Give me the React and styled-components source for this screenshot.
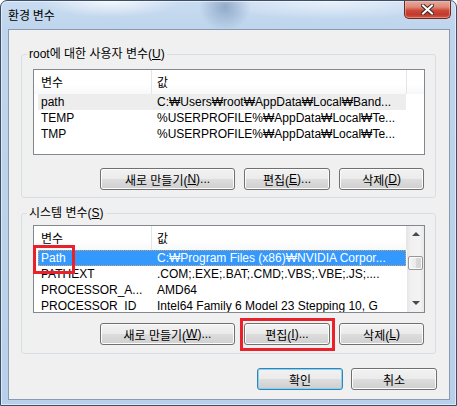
import React from 'react';
import styled, { createGlobalStyle } from 'styled-components';

const GlobalStyle = createGlobalStyle`
  html, body { margin: 0; padding: 0; background: #ffffff; }
  body {
    font-family: "Liberation Sans", "Noto Sans CJK KR", sans-serif;
    font-size: 12px;
    color: #000000;
  }
`;

const Frame = styled.div`
  width: 457px;
  height: 406px;
  box-sizing: border-box;
  border: 1px solid #3d4f66;
  border-radius: 7px 7px 0 0;
  display: flex;
  flex-direction: column;
  overflow: hidden;
  background:
    radial-gradient(ellipse 70px 16px at 110px 0px, rgba(255,255,255,0.8), rgba(255,255,255,0) 100%),
    radial-gradient(ellipse 26px 24px at 224px 6px, rgba(100,130,170,0.55), rgba(100,130,170,0) 100%),
    radial-gradient(ellipse 120px 16px at 330px 2px, rgba(236,243,251,0.85), rgba(236,243,251,0) 100%),
    linear-gradient(180deg, #c9dcf1 0px, #bed5ed 28px, #b9d0ea 100%);
  box-shadow: inset 0 0 0 1px rgba(255,255,255,0.5);
`;

const TitleBar = styled.div`
  height: 28px;
  display: flex;
  align-items: flex-start;
  flex-shrink: 0;
`;

const Title = styled.div`
  padding: 6px 0 0 7px;
  line-height: 16px;
  font-size: 12px;
  font-family: "Noto Sans CJK KR", sans-serif;
  color: #000;
`;

const CloseButton = styled.div`
  margin-left: auto;
  margin-right: 5px;
  width: 47px;
  height: 18px;
  box-sizing: border-box;
  border: 1px solid #6a2a22;
  border-top: none;
  border-radius: 0 0 5px 5px;
  display: flex;
  align-items: center;
  justify-content: center;
  background: linear-gradient(180deg, #e9a898 0%, #df8a78 35%, #cc4a3b 55%, #c2392a 80%, #d35a3f 100%);
  box-shadow: inset 0 0 0 1px rgba(255, 200, 190, 0.45);
`;

const Client = styled.div`
  margin: 0 6px 0 7px;
  height: 371px;
  box-sizing: border-box;
  border: 1px solid #8a9ab0;
  background: #f0f0f0;
  padding: 17px 13px 0 12px;
  display: flex;
  flex-direction: column;
  flex-shrink: 0;
`;

const Group = styled.fieldset`
  margin: 0 0 ${p => p.$gap || 0}px 0;
  padding: 0;
  border: 1px solid #d5dfe5;
  border-radius: 3px;
  min-width: 0;
`;

const Legend = styled.legend`
  margin-left: 5px;
  padding: 0 2px;
  line-height: 14px;
  font-size: 12px;
`;

const GroupBody = styled.div`
  padding: ${p => p.$top}px 10px ${p => p.$bottom}px 11px;
`;

const ListView = styled.div`
  height: ${p => p.$height}px;
  box-sizing: border-box;
  border: 1px solid #828790;
  background: #ffffff;
  display: flex;
  overflow-x: visible;
  overflow-y: clip;
`;

const Columns = styled.div`
  flex: 1;
  min-width: 0;
  display: flex;
  flex-direction: column;
`;

const Header = styled.div`
  display: flex;
  height: 24px;
  flex-shrink: 0;
  background: linear-gradient(180deg, #ffffff 0%, #ffffff 60%, #f7f8f9 100%);
`;

const HeadCell = styled.div`
  width: ${p => p.$w ? `${p.$w}px` : 'auto'};
  flex: ${p => p.$w ? '0 0 auto' : '1'};
  box-sizing: border-box;
  padding-left: ${p => p.$pad}px;
  line-height: 24px;
  border-right: 1px solid #e5e5e5;
  font-family: "Noto Sans CJK KR", sans-serif;
  font-size: 12px;
`;

const HeadFill = styled.div`
  flex: 1;
`;

const Row = styled.div`
  display: flex;
  width: fit-content;
  margin-left: 4px;
  height: 16px;
  flex-shrink: 0;
  box-sizing: border-box;
  line-height: 17px;
  white-space: nowrap;
  background: ${p => p.$sel === 'blue' ? '#3399ff' : p.$sel === 'grey' ? '#ededed' : 'transparent'};
  color: ${p => p.$sel === 'blue' ? '#ffffff' : '#000000'};
  outline: ${p => p.$sel === 'blue' ? '1px dotted #d9a066' : 'none'};
  outline-offset: -1px;
`;

const NameCell = styled.div`
  width: 113px;
  box-sizing: border-box;
  padding-left: 3px;
`;

const ValueCell = styled.div`
  width: 255px;
  box-sizing: border-box;
  padding-left: 6px;
  overflow: hidden;
`;

const Marked = styled.span`
  position: relative;
  display: inline-block;
  &::after {
    content: '';
    position: absolute;
    top: -5px;
    bottom: -7px;
    left: -8px;
    right: -9px;
    border: 3px solid #e8212b;
    pointer-events: none;
  }
`;

const ScrollBar = styled.div`
  width: 17px;
  flex-shrink: 0;
  display: flex;
  flex-direction: column;
  align-items: center;
  background: linear-gradient(90deg, #e6e6e6 0%, #f1f1f1 25%, #f3f3f3 75%, #e8e8e8 100%);
`;

const ArrowBox = styled.div`
  height: 16px;
  width: 100%;
  display: flex;
  align-items: center;
  justify-content: center;
  margin-top: ${p => p.$down ? 'auto' : '0'};
  margin-bottom: ${p => p.$down ? '1px' : '0'};
`;

const Arrow = styled.div`
  width: 0;
  height: 0;
  border-left: 4px solid transparent;
  border-right: 4px solid transparent;
  ${p => p.$down ? 'border-top: 4px solid #4a4a4a;' : 'border-bottom: 4px solid #4a4a4a;'}
`;

const Thumb = styled.div`
  width: 15px;
  height: 14px;
  margin-top: 14px;
  box-sizing: border-box;
  border: 1px solid #979797;
  border-radius: 2px;
  background: linear-gradient(90deg, #f5f5f5 0%, #eaeaea 50%, #dadada 51%, #d4d4d4 100%);
  box-shadow: inset 0 0 0 1px #fbfbfb;
`;

const ButtonRow = styled.div`
  display: flex;
  justify-content: flex-end;
  gap: ${p => p.$gap || 9}px;
  margin-top: ${p => p.$top}px;
  padding-right: ${p => p.$right || 0}px;
`;

const Button = styled.div`
  width: ${p => p.$w || 86}px;
  height: 22px;
  box-sizing: border-box;
  border: 1px solid ${p => p.$default ? '#3c7fb1' : '#707070'};
  border-radius: 3px;
  display: flex;
  align-items: center;
  justify-content: center;
  font-size: 12px;
  color: #000;
  background: linear-gradient(180deg, #f2f2f2 0%, #ebebeb 48%, #dddddd 52%, #cfcfcf 100%);
  box-shadow: inset 0 0 0 1px ${p => p.$default ? '#7fd6f5' : '#fcfcfc'};
  position: relative;
  white-space: nowrap;
  ${p => p.$marked ? `
    &::after {
      content: '';
      position: absolute;
      top: -6px;
      bottom: -7px;
      left: -5px;
      right: -6px;
      border: 3px solid #e8212b;
      pointer-events: none;
    }
  ` : ''}
`;

const BottomRow = styled.div`
  display: flex;
  justify-content: flex-end;
  gap: 8px;
  margin-top: 14px;
  margin-right: -1px;
`;

const userVars = [
  { name: 'path', value: 'C:₩Users₩root₩AppData₩Local₩Band...', sel: 'grey' },
  { name: 'TEMP', value: '%USERPROFILE%₩AppData₩Local₩Te...' },
  { name: 'TMP', value: '%USERPROFILE%₩AppData₩Local₩Te...' },
];

const sysVars = [
  { name: 'Path', value: 'C:₩Program Files (x86)₩NVIDIA Corpor...', sel: 'blue', marked: true },
  { name: 'PATHEXT', value: '.COM;.EXE;.BAT;.CMD;.VBS;.VBE;.JS;....' },
  { name: 'PROCESSOR_A...', value: 'AMD64' },
  { name: 'PROCESSOR_ID', value: 'Intel64 Family 6 Model 23 Stepping 10, G' },
];

function VarList({ rows, height, scroll }) {
  return (
    <ListView $height={height}>
      <Columns>
        <Header>
          <HeadCell $w={118} $pad={7}>변수</HeadCell>
          <HeadCell $w={scroll ? 0 : 255} $pad={5}>값</HeadCell>
          {!scroll && <HeadFill />}
        </Header>
        {rows.map(r => (
          <Row key={r.name} $sel={r.sel}>
            <NameCell>{r.marked ? <Marked>{r.name}</Marked> : r.name}</NameCell>
            <ValueCell>{r.value}</ValueCell>
          </Row>
        ))}
      </Columns>
      {scroll && (
        <ScrollBar>
          <ArrowBox><Arrow /></ArrowBox>
          <Thumb />
          <ArrowBox $down><Arrow $down /></ArrowBox>
        </ScrollBar>
      )}
    </ListView>
  );
}

export default function App() {
  return (
    <>
      <GlobalStyle />
      <Frame>
        <TitleBar>
          <Title>환경 변수</Title>
          <CloseButton>
            <svg width="13" height="11" viewBox="0 0 13 11">
              <path d="M2 1.5 L11 9.5 M11 1.5 L2 9.5" stroke="#3b2a28" strokeWidth="4" strokeLinecap="square" />
              <path d="M2 1.5 L11 9.5 M11 1.5 L2 9.5" stroke="#ffffff" strokeWidth="2" strokeLinecap="square" />
            </svg>
          </CloseButton>
        </TitleBar>
        <Client>
          <Group $gap={8}>
            <Legend>root에 대한 사용자 변수(<u>U</u>)</Legend>
            <GroupBody $top={8} $bottom={7}>
              <VarList rows={userVars} height={86} />
              <ButtonRow $top={13} $right={1}>
                <Button $w={135}>새로 만들기(<u>N</u>)...</Button>
                <Button>편집(<u>E</u>)...</Button>
                <Button $w={85}>삭제(<u>D</u>)</Button>
              </ButtonRow>
            </GroupBody>
          </Group>
          <Group>
            <Legend>시스템 변수(<u>S</u>)</Legend>
            <GroupBody $top={5} $bottom={8}>
              <VarList rows={sysVars} height={88} scroll />
              <ButtonRow $top={10} $right={1}>
                <Button $w={135}>새로 만들기(<u>W</u>)...</Button>
                <Button $marked>편집(<u>I</u>)...</Button>
                <Button $w={85}>삭제(<u>L</u>)</Button>
              </ButtonRow>
            </GroupBody>
          </Group>
          <BottomRow>
            <Button $default>확인</Button>
            <Button>취소</Button>
          </BottomRow>
        </Client>
      </Frame>
    </>
  );
}
